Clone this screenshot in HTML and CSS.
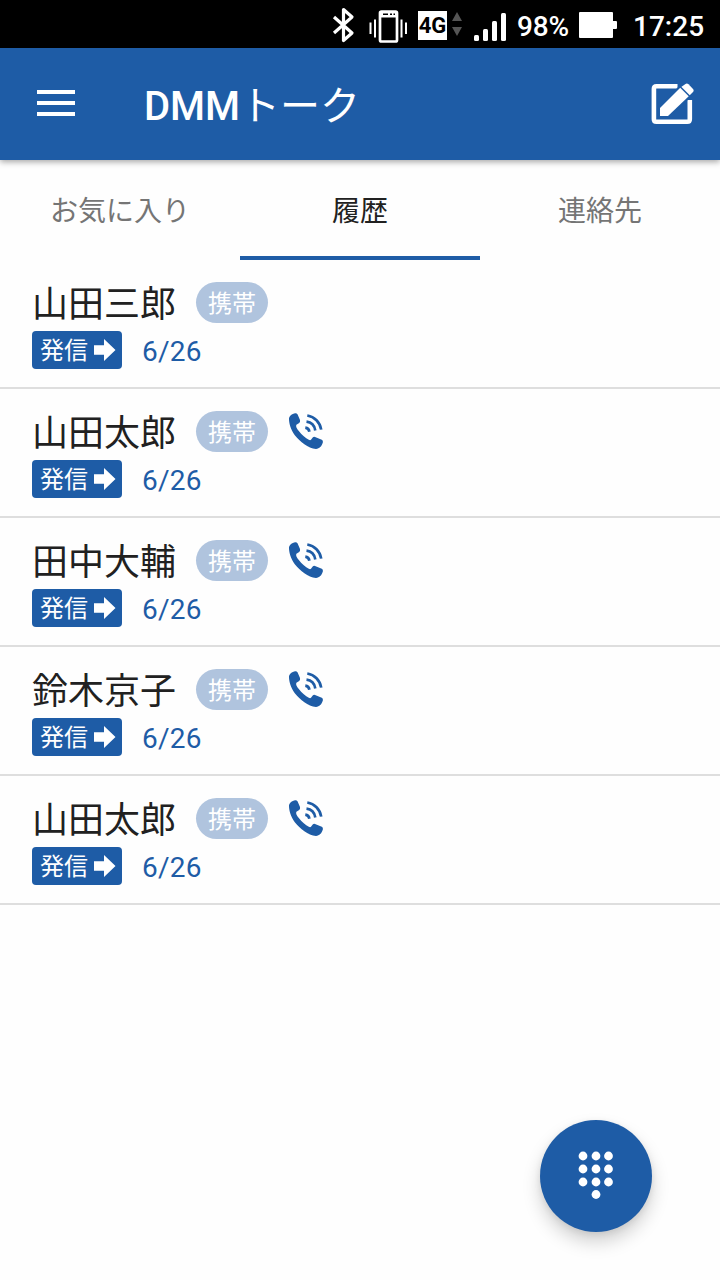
FILE: index.html
```html
<!DOCTYPE html>
<html lang="ja">
<head>
<meta charset="utf-8">
<title>DMMトーク</title>
<link rel="stylesheet" href="styles.css">
</head>
<body>
<svg class="defs" aria-hidden="true">
  <symbol id="call" viewBox="0 0 36 38">
    <path fill="currentColor" d="M1 6Q2 2.500 7 1.200Q8.600 .9 9.500 2.300L12 7.900Q12.500 10 11.200 10.900L8.400 12.800C7.600 14 8.500 16.500 11 19.300C14 23 17.500 26 20.800 27.800Q22.300 28.500 23 27.700L24.700 25.500Q25.600 24.500 27 24.900L33.800 27.700Q35.200 28.500 34.900 30.200C33.600 34.500 31.500 36.500 28 36.900C20 36.500 12 29.500 7 23.500C2.700 17.500 .8 11 1 6Z"/>
    <path fill="none" stroke="currentColor" stroke-width="2.700" d="M19.300 3.500C26.500 4.700 32 10.200 33.200 17.600M18.500 9.700C23.300 10.300 26.500 13.700 27.300 18.400M17.300 15.700C19.600 16 21 17.400 21.400 19.700"/>
  </symbol>
  <symbol id="arrow" viewBox="0 0 22 22">
    <path fill="currentColor" d="M0 6.300H10V0L21.500 11L10 22V15.700H0Z"/>
  </symbol>
</svg>

<div class="status">
  <svg class="icon-bt" width="24" height="36" viewBox="0 0 24 36"><path d="M2 10L20 26L11.500 33.500V2.500L20 10L2 26" fill="none" stroke="#fff" stroke-width="3.200" stroke-linejoin="round"/></svg>
  <svg class="icon-vib" width="38" height="33" viewBox="0 0 38 33"><g fill="none" stroke="#fff"><rect x="11" y="1.500" width="17" height="30" rx="1.500" stroke-width="2.700"/><path stroke-width="2" d="M1.500 12.500V24M6 9.500V27.500M32.500 9.500V27.500M37 12.500V24"/></g><path fill="#fff" d="M11 2H28V7.500H11Z"/><path fill="#000" d="M14 3.500H19V5H14ZM21 3.500H23V5H21ZM24.500 3.500H26V5H24.500Z"/></svg>
  <span class="net">4G</span>
  <svg class="icon-data" width="10" height="24" viewBox="0 0 10 24" fill="#555"><path d="M5 0L10 9H0ZM0 15H10L5 24Z"/></svg>
  <svg class="icon-signal" width="32" height="28" viewBox="0 0 32 28" fill="#fff"><rect y="22" width="5" height="6" rx="1.500"/><rect x="9" y="16" width="5" height="12" rx="1.500"/><rect x="18" y="8" width="5" height="20" rx="1.500"/><rect x="27" width="5" height="28" rx="1.500"/></svg>
  <span class="percent">98%</span>
  <svg class="icon-batt" width="38" height="26" viewBox="0 0 38 26" fill="#fff"><rect width="34" height="26" rx="1"/><rect x="33" y="9" width="5" height="8" rx="1"/></svg>
  <span class="clock">17:25</span>
</div>

<header class="bar">
  <svg class="menu" width="38" height="26" viewBox="0 0 38 26" fill="#fff"><path d="M0 0H38V4H0ZM0 11H38V15H0ZM0 22H38V26H0Z"/></svg>
  <h1 class="title">DMM<span class="kana">トーク</span></h1>
  <svg class="compose" width="44" height="42" viewBox="0 0 44 42"><path d="M27.500 3.200H6.500Q3.900 3.200 3.900 5.800V36.200Q3.900 38.800 6.500 38.800H37.200Q39.800 38.800 39.800 36.200V17" fill="none" stroke="#fff" stroke-width="4.600"/><path fill="#fff" stroke="#1e5ca6" stroke-width="4" stroke-linejoin="round" paint-order="stroke" d="M10 25L30.500 4.500L35.500 1Q37 0 38.500 1.300L43 6Q44.300 7.500 43 9L39 13L18 33H10Z"/><path stroke="#1e5ca6" stroke-width="1.500" d="M30 3.500L40.500 14"/></svg>
</header>

<nav class="tabs">
  <span class="tab">お気に入り</span>
  <span class="tab active">履歴</span>
  <span class="tab">連絡先</span>
</nav>

<main>
  <div class="row">
    <div class="who"><span class="name">山田三郎</span><span class="pill">携帯</span></div>
    <div class="meta"><span class="chip">発信<svg class="arrow"><use href="#arrow"/></svg></span><span class="date">6/26</span></div>
  </div>
  <div class="row">
    <div class="who"><span class="name">山田太郎</span><span class="pill">携帯</span><svg class="call"><use href="#call"/></svg></div>
    <div class="meta"><span class="chip">発信<svg class="arrow"><use href="#arrow"/></svg></span><span class="date">6/26</span></div>
  </div>
  <div class="row">
    <div class="who"><span class="name">田中大輔</span><span class="pill">携帯</span><svg class="call"><use href="#call"/></svg></div>
    <div class="meta"><span class="chip">発信<svg class="arrow"><use href="#arrow"/></svg></span><span class="date">6/26</span></div>
  </div>
  <div class="row">
    <div class="who"><span class="name">鈴木京子</span><span class="pill">携帯</span><svg class="call"><use href="#call"/></svg></div>
    <div class="meta"><span class="chip">発信<svg class="arrow"><use href="#arrow"/></svg></span><span class="date">6/26</span></div>
  </div>
  <div class="row">
    <div class="who"><span class="name">山田太郎</span><span class="pill">携帯</span><svg class="call"><use href="#call"/></svg></div>
    <div class="meta"><span class="chip">発信<svg class="arrow"><use href="#arrow"/></svg></span><span class="date">6/26</span></div>
  </div>
</main>

<div class="fab">
  <svg width="36" height="50" viewBox="0 0 36 50" fill="#fff"><circle cx="5" cy="5" r="4.400"/><circle cx="18" cy="5" r="4.400"/><circle cx="30.500" cy="5" r="4.400"/><circle cx="5" cy="18" r="4.400"/><circle cx="18" cy="18" r="4.400"/><circle cx="30.500" cy="18" r="4.400"/><circle cx="5" cy="31" r="4.400"/><circle cx="18" cy="31" r="4.400"/><circle cx="30.500" cy="31" r="4.400"/><circle cx="18" cy="43.500" r="4.400"/></svg>
</div>
</body>
</html>
```
FILE: styles.css
```css
* { box-sizing: border-box; }
body {
  margin: 0;
  height: 1280px;
  overflow: hidden;
  background: #fefefe;
  color: #212121;
  font-family: Roboto, "Noto Sans CJK JP", sans-serif;
}
svg { display: block; flex: none; }
.defs { position: absolute; width: 0; height: 0; }

.status {
  display: flex;
  align-items: center;
  height: 48px;
  padding: 2px 15px 0 332px;
  background: #000;
  color: #fff;
}
.icon-vib { margin-left: 13px; margin-top: 2px; }
.net {
  width: 29px;
  height: 29px;
  margin-left: 11px;
  background: #fff;
  color: #000;
  font: bold 22px/30px Roboto, sans-serif;
  text-align: center;
}
.icon-data { margin-left: 5px; margin-bottom: 2px; }
.icon-signal { margin-left: 12px; margin-top: 3px; }
.percent, .clock { padding-top: 3px; font-size: 28px; line-height: 48px; white-space: nowrap; }
.percent { width: 53px; margin-left: 11px; font-weight: 500; letter-spacing: -0.2px; }
.icon-batt { margin-left: 9px; }
.clock { margin-left: 16px; font-weight: 500; }

.bar {
  position: relative;
  display: flex;
  align-items: center;
  height: 112px;
  padding: 0 26px 0 37px;
  background: #1e5ca6;
  box-shadow: 0 2px 6px rgba(0, 0, 0, .35);
  color: #fff;
}
.menu { margin-bottom: 2px; }
.title { margin: 6px auto 0 69px; font-size: 40px; line-height: 56px; font-weight: 500; }
.kana { font-weight: 400; }

.tabs { display: grid; grid-template-columns: repeat(3, 1fr); height: 100px; }
.tab {
  padding-top: 32px;
  border-bottom: 4px solid transparent;
  color: #757575;
  font-size: 28px;
  line-height: 40px;
  text-align: center;
}
.active { border-color: #1e5ca6; color: #212121; }

.row { height: 129px; padding: 22px 32px 0; border-bottom: 2px solid #dedede; }
.who { display: flex; align-items: center; height: 41px; }
.name { padding-top: 5px; font-size: 36px; line-height: 41px; }
.pill {
  width: 72px;
  height: 41px;
  margin-left: 20px;
  border-radius: 21px;
  background: #b0c4de;
  color: #fff;
  font-size: 24px;
  line-height: 44px;
  text-align: center;
}
.call { width: 36px; height: 38px; margin: 0 0 2px 20px; color: #1e5ca6; }
.meta { display: flex; align-items: center; height: 38px; margin-top: 8px; color: #1e5ca6; }
.chip {
  display: flex;
  width: 90px;
  height: 38px;
  padding-left: 8px;
  border-radius: 4px;
  background: #1e5ca6;
  color: #fff;
  font-size: 24px;
  line-height: 40px;
}
.arrow { width: 22px; height: 22px; margin: 8px 0 0 6px; }
.date { margin-left: 20px; padding-top: 4px; font-size: 28px; line-height: 38px; letter-spacing: 0.2px; }

.fab {
  position: absolute;
  left: 540px;
  top: 1120px;
  display: flex;
  justify-content: center;
  align-items: center;
  width: 112px;
  height: 112px;
  border-radius: 50%;
  background: #1e5ca6;
  box-shadow: 0 10px 18px rgba(0, 0, 0, .18), 0 2px 6px rgba(0, 0, 0, .08);
}
```
